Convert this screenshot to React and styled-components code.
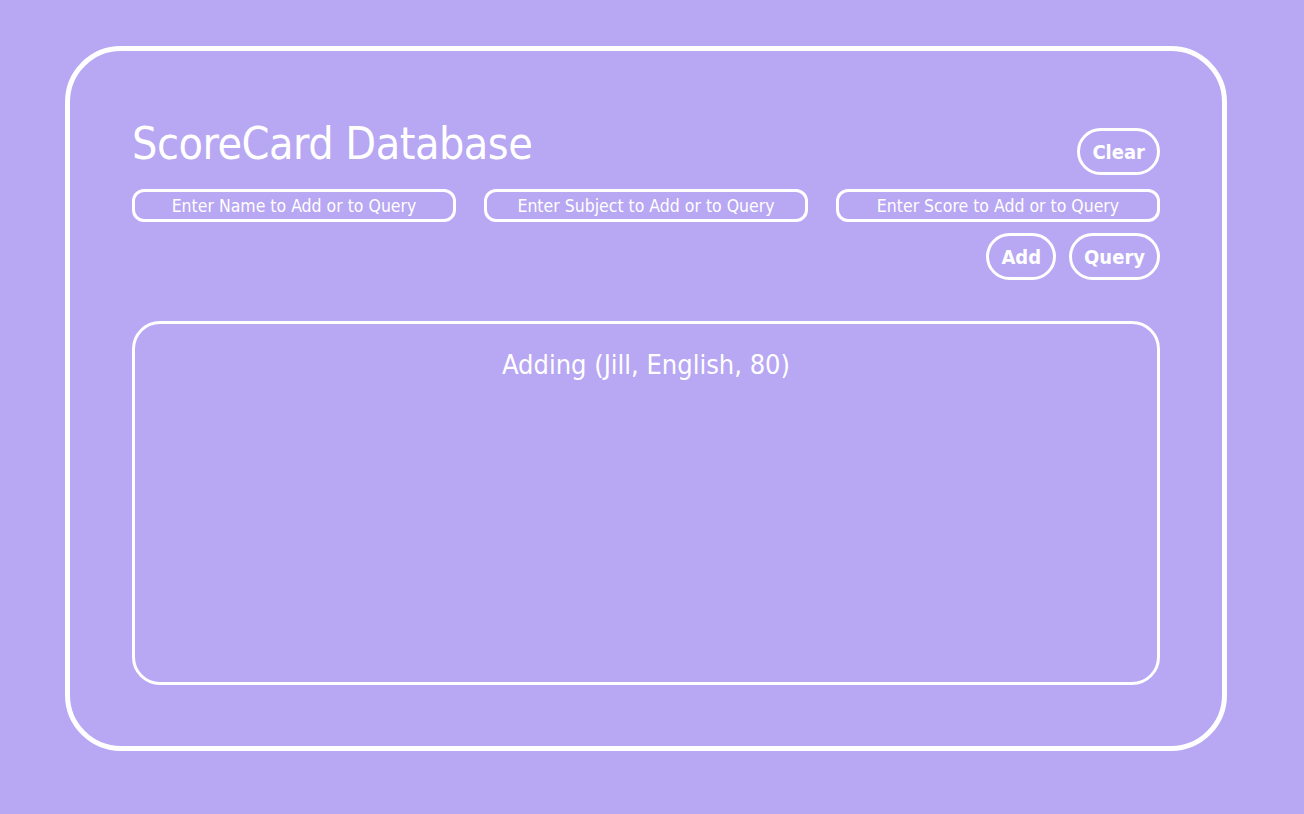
import styled, { createGlobalStyle } from "styled-components";

const GlobalStyle = createGlobalStyle`
  html, body {
    margin: 0;
    padding: 0;
    background: #b8a7f2;
  }
  body {
    font-family: "DejaVu Sans Condensed", "DejaVu Sans", sans-serif;
    color: #ffffff;
  }
`;

const Page = styled.div`
  min-height: 814px;
  padding: 46px 0 0 65px;
  box-sizing: border-box;
`;

const Card = styled.div`
  width: 1162px;
  height: 705px;
  box-sizing: border-box;
  border: 5px solid #ffffff;
  border-radius: 56px;
  padding: 65px 62px 61px;
  display: flex;
  flex-direction: column;
`;

const Header = styled.div`
  display: flex;
  justify-content: space-between;
  align-items: flex-start;
`;

const Title = styled.h1`
  margin: 0;
  font-size: 44.5px;
  font-weight: 400;
  line-height: 56px;
  letter-spacing: -0.5px;
`;

const PillButton = styled.button`
  background: transparent;
  border: 3px solid #ffffff;
  border-radius: 24px;
  color: #ffffff;
  font-family: inherit;
  font-weight: 700;
  font-size: 20px;
  height: 47px;
  padding: 0 12px;
  cursor: pointer;
  margin-top: ${({ $offset }) => $offset || 0}px;
`;

const InputRow = styled.div`
  display: grid;
  grid-template-columns: repeat(3, 1fr);
  gap: 28px;
  margin-top: 14px;
`;

const Field = styled.input`
  height: 33px;
  box-sizing: border-box;
  background: transparent;
  border: 3px solid #ffffff;
  border-radius: 12px;
  color: #ffffff;
  font-family: inherit;
  font-size: 17.5px;
  text-align: center;
  outline: none;
  &::placeholder {
    color: #ffffff;
    opacity: 1;
  }
`;

const Actions = styled.div`
  display: flex;
  justify-content: flex-end;
  gap: 13px;
  margin-top: 11px;
`;

const Output = styled.div`
  flex: 1;
  margin-top: 41px;
  border: 3px solid #ffffff;
  border-radius: 28px;
  padding-top: 24px;
  text-align: center;
  font-size: 27px;
  line-height: 34px;
`;

export default function App() {
  return (
    <>
      <GlobalStyle />
      <Page>
        <Card>
          <Header>
            <Title>ScoreCard Database</Title>
            <PillButton $offset={12}>Clear</PillButton>
          </Header>
          <InputRow>
            <Field placeholder="Enter Name to Add or to Query" />
            <Field placeholder="Enter Subject to Add or to Query" />
            <Field placeholder="Enter Score to Add or to Query" />
          </InputRow>
          <Actions>
            <PillButton>Add</PillButton>
            <PillButton>Query</PillButton>
          </Actions>
          <Output>Adding (Jill, English, 80)</Output>
        </Card>
      </Page>
    </>
  );
}
